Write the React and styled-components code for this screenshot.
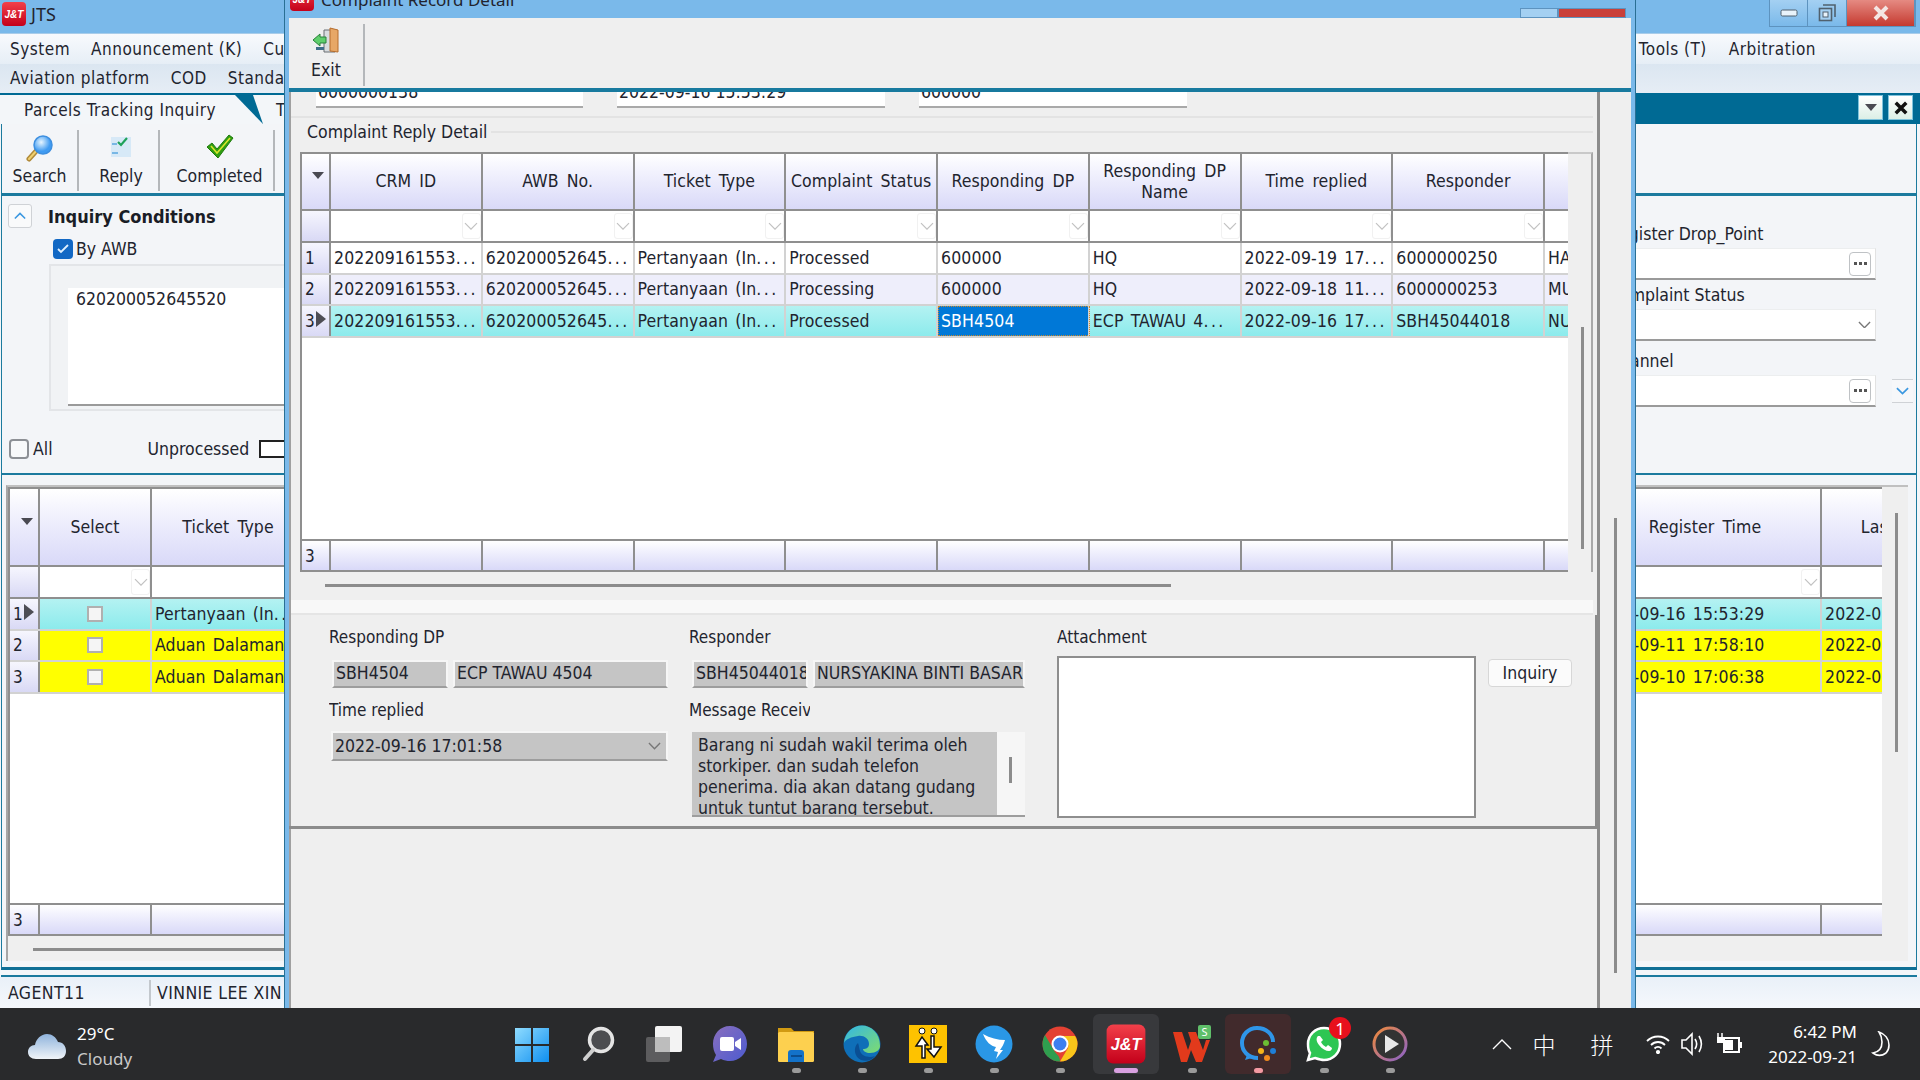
import React from "react";
import styled, { createGlobalStyle } from "styled-components";

const Global = createGlobalStyle`
  html, body { margin: 0; padding: 0; background: #efefef; }
  * { box-sizing: border-box; }
  body { font-family: "DejaVu Sans Condensed", "DejaVu Sans", sans-serif; font-size: 17.5px; color: #22242e; }
`;

const TEAL = "#1b7a9e";
const LINE = "#8f8f8f";
const HEAD = "linear-gradient(180deg,#ffffff 0%,#f1f1fd 35%,#d9d9f8 100%)";
const SELECT = "linear-gradient(180deg,#b4f2f2 0%,#8cebec 100%)";

const Page = styled.div`
  width: 1920px; height: 1080px; overflow: hidden; display: flex; flex-direction: column;
`;
const Desktop = styled.div`
  position: relative; height: 1008px; overflow: hidden;
`;
const MainWindow = styled.div`
  height: 1008px; display: flex; flex-direction: column; background: #f3f6f9;
`;
const TitleBar = styled.div`
  height: 34px; background: #7ab9ea; display: flex; align-items: flex-start; flex: none;
  border-bottom: 1px solid #a9cdea;
`;
const AppName = styled.div`
  display: flex; align-items: center; gap: 4px; height: 27px; padding-left: 1px; font-size: 18px; font-family: "Noto Sans", sans-serif;
`;
const WinControls = styled.div`
  margin-left: auto; margin-right: 4px; display: flex; height: 27px; border: 1px solid #5d93bf; border-top: 0;
`;
const WinBtn = styled.div`
  width: ${p => p.$w}px; display: flex; align-items: center; justify-content: center;
  background: ${p => p.$close ? "linear-gradient(180deg,#e58a82,#c53a30)" : "linear-gradient(180deg,#a4d0f2,#7ab9ea)"};
  border-right: 1px solid #5d93bf;
`;
const MenuBar = styled.div`
  height: 59px; flex: none; display: flex; flex-direction: column;
`;
const MenuRow = styled.div`
  height: 29.5px; display: flex; align-items: center; gap: 21px; padding-left: 10px; font-size: 17px; letter-spacing: .5px;
  background: ${p => p.$top ? "linear-gradient(180deg,#f8fafd,#e6eef6)" : "linear-gradient(180deg,#dbe6f1,#e6edf5)"};
`;
const MenuRight = styled.div`
  margin-left: auto; margin-right: 104px; display: flex; gap: 22px;
`;
const TabBand = styled.div`
  height: 31px; flex: none; background: #006a94; display: flex; align-items: stretch; padding-top: 2px;
`;
const Tab = styled.div`
  width: 263px; padding-left: 24px; display: flex; align-items: center; font-size: 17px; letter-spacing: .5px; background: #f3f6f9; white-space: nowrap;
  clip-path: polygon(0 0, 235px 0, 263px 100%, 0 100%);
`;
const SecondTab = styled.div`
  width: 210px; margin-left: -10px; padding-left: 23px; display: flex; align-items: center; font-size: 17px; background: #f3f6f9;
  clip-path: polygon(0 0, 100% 0, 100% 100%, 10px 100%);
`;
const BandButtons = styled.div`
  margin-left: auto; margin-right: 7px; display: flex; gap: 5px; align-items: flex-start;
`;
const BandBtn = styled.div`
  width: 25px; height: 25px; background: linear-gradient(180deg,#ffffff,#dcefe6); border: 1px solid #7fc3dc;
  display: flex; align-items: center; justify-content: center;
`;
const MainToolbar = styled.div`
  height: 72px; flex: none; margin: 0 3px 0 1px; display: flex; background: #f3f5f8;
  border-left: 1px solid ${TEAL}; border-right: 1px solid ${TEAL}; border-bottom: 3px solid ${TEAL}; padding-top: 6px; padding-bottom: 2px;
`;
const ToolBtn = styled.div`
  width: ${p => p.$w}px; display: flex; flex-direction: column; align-items: center; justify-content: space-between;
  border-right: 2px solid #b4b7ba; font-size: 17.5px; line-height: 24px; padding: 4px 0 3px ${p => p.$pl || 0}px;
`;
const InquiryPanel = styled.div`
  height: 279px; flex: none; margin: 0 3px 0 1px; display: flex; justify-content: space-between; background: #f3f5f8;
  border-left: 1px solid ${TEAL}; border-right: 1px solid ${TEAL}; border-bottom: 2px solid ${TEAL};
`;
const CondLeft = styled.div`
  width: 284px; display: flex; flex-direction: column; padding-top: 8px; overflow: hidden;
`;
const CondHead = styled.div`
  display: flex; align-items: center; padding-left: 6px; height: 24px; font-weight: 700; font-size: 18px; color: #1a1d26;
`;
const CollapseBtn = styled.div`
  width: 24px; height: 24px; margin-right: 16px; background: #f9fafb; border: 1px solid #cfd2d6; border-radius: 3px; flex: none;
  display: flex; align-items: center; justify-content: center;
`;
const CheckLine = styled.div`
  display: flex; align-items: center; gap: 3px; padding-left: 51px; margin-top: 9px; height: 24px;
`;
const BlueCheck = styled.div`
  width: 20px; height: 20px; border-radius: 4px; background: #1268c4; display: flex; align-items: center; justify-content: center; flex: none;
`;
const AwbGroup = styled.div`
  margin: 3px 0 0 47px; width: 300px; height: 147px; flex: none; border: 2px solid #e3e5e8; padding: 22px 0 0 17px; background: #f1f3f5;
`;
const AwbText = styled.div`
  height: 118px; background: #fff; border-bottom: 2px solid #9a9a9a; padding: 1px 8px; font-size: 17.5px;
`;
const OptionLine = styled.div`
  display: flex; align-items: center; margin-top: 26px; padding-left: 7px; height: 24px; flex: none;
`;
const EmptyCheck = styled.div`
  width: 20px; height: 20px; flex: none; border: 2px solid #8d9095; border-radius: 4px; background: #f8f9fa; margin-right: 4px;
`;
const UnprocLabel = styled.div`
  margin-left: 95px; white-space: nowrap; flex: none;
`;
const UnprocBox = styled.div`
  width: 40px; height: 18px; border: 2px solid #222; background: #fff; margin-left: 10px; flex: none;
`;
const CondRight = styled.div`
  width: 500px; padding-top: 25px; display: flex; flex-direction: column; padding-left: 213px;
`;
const CondLabel = styled.div`
  height: 27px; line-height: 27px; margin-left: -20px; white-space: nowrap;
`;
const CondRowLine = styled.div`
  display: flex; align-items: center; margin-bottom: ${p => p.$mb}px;
`;
const CondField = styled.div`
  width: 247px; height: 32px; flex: none; background: #fff; border-bottom: 2px solid #9a9a9a;
  border-right: 1px solid #e2e2e2; border-top: 1px solid #eceeef; display: flex; align-items: center; justify-content: flex-end; padding-right: 4px;
`;
const DotsBtn = styled.div`
  width: 22px; height: 24px; border: 1px solid #bfc2c5; border-radius: 4px; background: #fff; display: flex; align-items: center; justify-content: center; gap: 2px;
`;
const Dot = styled.i`
  width: 3px; height: 3px; background: #555; display: block;
`;
const SmallChevronBtn = styled.div`
  width: 21px; height: 24px; margin-left: 16px; background: #f6f7f9; border-top: 1px solid #cfd2d6; border-bottom: 1px solid #cfd2d6;
  display: flex; align-items: center; justify-content: center;
`;
const LowerPanel = styled.div`
  flex: 1; margin: 0 3px 0 1px; min-height: 0; background: #f3f5f8; border-left: 1px solid ${TEAL}; border-right: 1px solid ${TEAL};
  border-bottom: 3px solid #0f6f96; padding: 10px 8px 7px 4px; display: flex; flex-direction: column;
`;
const LowerInner = styled.div`
  flex: 1; background: #efefef; border-left: 2px solid #a6a6a6; border-top: 2px solid #c0c0c0; display: flex; flex-direction: column;
`;
const LowerGridRow = styled.div`
  display: flex; height: 449px; flex: none;
`;
const ThumbGutter = styled.div`
  flex: 1; padding-left: ${p => p.$pl}px; padding-top: ${p => p.$pt}px;
`;
const VThumb = styled.div`
  width: 3px; height: ${p => p.$h}px; background: #8c8c8c;
`;
const HThumbRow = styled.div`
  height: ${p => p.$h}px; padding-left: ${p => p.$pl}px; padding-top: ${p => p.$pt}px; flex: none;
`;
const HThumb = styled.div`
  height: 3px; width: ${p => p.$w}px; background: #8c8c8c;
`;
const ThinBar = styled.div`
  height: 2px; flex: none; margin: 5px 3px 0 1px; background: ${TEAL};
`;
const StatusBar = styled.div`
  height: 31px; flex: none; display: flex; align-items: center; background: linear-gradient(180deg,#e9f0f8,#f5f8fc); font-size: 17.5px;
`;
const StatusCell = styled.div`
  width: ${p => p.$w}px; padding-left: ${p => p.$pl}px; border-right: ${p => p.$sep ? "2px solid #c3c8cd" : "none"}; height: 26px; line-height: 26px; white-space: nowrap; letter-spacing: .4px;
`;

/* data grid */
const DataGrid = styled.div`
  width: ${p => p.$w}px; flex: none; background: #fff; display: flex; flex-direction: column; overflow: hidden;
  border-left: 2px solid ${LINE}; border-top: 2px solid ${LINE};
`;
const GridRow = styled.div`
  display: grid; grid-template-columns: ${p => p.$cols}; height: ${p => p.$h}px; flex: none;
  border-bottom: ${p => p.$b || `2px solid ${LINE}`};
  border-top: ${p => p.$t ? `2px solid ${LINE}` : "none"};
  background: ${p => p.$bg || "#fff"};
`;
const GridBlank = styled.div`
  flex: 1;
`;
const Corner = styled.div`
  background: ${HEAD}; border-right: 2px solid ${LINE}; display: flex; align-items: center; justify-content: flex-end; padding: 0 5px 12px 0;
`;
const HeadCell = styled.div`
  background: ${HEAD}; border-right: ${p => p.$last ? "none" : `2px solid ${LINE}`}; display: flex; align-items: center; justify-content: center; text-align: center;
  line-height: 21px; white-space: pre-line; padding: 0 2px; overflow: hidden; word-spacing: 3px; letter-spacing: .1px;
`;
const FilterCell = styled.div`
  background: #fff; border-right: ${p => p.$last ? "none" : `2px solid ${LINE}`}; display: flex; justify-content: flex-end; padding: 2px 0;
`;
const FilterDrop = styled.div`
  width: 19px; border: 1px solid #f1f1f1; border-radius: 3px; display: flex; align-items: center; justify-content: center;
`;
const IndexCell = styled.div`
  background: linear-gradient(180deg,#f6f6fe,#d9d9f5); border-right: 2px solid ${LINE}; display: flex; align-items: center; padding-left: 3px; gap: 1px; font-size: 17px; overflow: hidden;
`;
const Arrow = styled.i`
  width: 0; height: 0; border-left: 10px solid #4d4d55; border-top: 8px solid transparent; border-bottom: 8px solid transparent; margin-top: -4px; display: block; flex: none;
`;
const DataCell = styled.div`
  border-right: ${p => p.$last ? "none" : "2px solid #d2d2d2"}; padding-left: 3px; display: flex; align-items: center; white-space: pre; overflow: hidden; letter-spacing: .12px; word-spacing: 2px;
  ${p => p.$active && `background:#0078d7;color:#fff;outline:1px dotted #c98a2b;outline-offset:-1px;`}
`;
const Dots = styled.span`
  letter-spacing: 2.4px;
`;
const CheckCell = styled.div`
  border-right: 2px solid #d2d2d2; display: flex; align-items: center; justify-content: center;
`;
const SquareBox = styled.div`
  width: 16px; height: 16px; border: 2px solid #b0b0b0; background: #f5f5f5;
`;
const FootCell = styled.div`
  background: ${HEAD}; border-right: ${p => p.$last ? "none" : `2px solid ${LINE}`}; display: flex; align-items: center; padding-left: 3px; font-size: 17px;
`;

/* dialog */
const Dialog = styled.div`
  position: absolute; left: 285px; top: 0; width: 1350px; height: 1008px; display: flex; flex-direction: column;
  background: #efefef; border-left: 4px solid #7ab9ea; border-right: 4px solid #7ab9ea; box-shadow: 0 0 0 1px #2a6f94;
`;
const DialogTitle = styled.div`
  height: 18px; flex: none; margin: 0 -3px; background: #7ab9ea; display: flex; align-items: flex-end; overflow: hidden; padding-bottom: 6px; gap: 6px; padding-left: 3px;
`;
const DialogName = styled.div`
  font-family: "Noto Sans", sans-serif; font-size: 17px; line-height: 24px; height: 24px; flex: none;
`;
const DialogControls = styled.div`
  margin-left: auto; margin-right: 8px; margin-bottom: -6px; height: 10px; display: flex; align-self: flex-end;
`;
const DlgBtn = styled.div`
  width: ${p => p.$w}px; border: 1px solid #5d93bf; background: ${p => p.$close ? "#c9403a" : "#a4d0f2"};
`;
const DialogToolbar = styled.div`
  height: 74px; flex: none; display: flex; padding: 6px 0 2px; border-bottom: 4px solid #187a9f;
`;
const ExitBtn = styled.div`
  width: 76px; border-right: 2px solid #b4b7ba; display: flex; flex-direction: column; align-items: center; justify-content: space-between; padding: 2px 0 4px; line-height: 24px;
`;
const DialogBody = styled.div`
  flex: 1; display: flex; min-height: 0;
`;
const DialogContent = styled.div`
  width: 1311px; flex: none; height: 100%; border-left: 2px solid #a0a0a0; border-right: 3px solid #8c8c8c; display: flex; flex-direction: column;
`;
const OuterGutter = styled.div`
  flex: 1; padding: 426px 0 0 14px;
`;
const FormStrip = styled.div`
  height: 26px; flex: none; display: flex; gap: 34px; padding-left: 25px; border-bottom: 2px solid #e3e3e3; margin-right: 4px;
`;
const CutField = styled.div`
  width: ${p => p.$w}px; height: 16px; background: #fff; border-bottom: 2px solid #a9a9a9; overflow: hidden; display: flex; align-items: flex-end; padding-left: 2px; padding-bottom: 2px;
`;
const CutText = styled.div`
  line-height: 24px; height: 24px; flex: none;
`;
const GroupTitle = styled.div`
  height: 34px; flex: none; display: flex; align-items: center; padding: 0 0 6px 16px; gap: 4px; margin-right: 4px;
  &::after { content: ""; flex: 1; height: 2px; background: #e3e3e3; }
`;
const GridArea = styled.div`
  display: flex; height: 420px; flex: none; padding-left: 9px; margin-right: 4px;
`;
const GridGutter = styled.div`
  flex: 1; padding: 173px 0 0 13px; border-right: 2px solid #a8a8a8; border-top: 2px solid #c9c9c9;
`;
const SplitBand = styled.div`
  height: 15px; flex: none; background: #f8f8f8; border-bottom: 2px solid #e5e5e5; margin-right: 4px;
`;
const DetailPanel = styled.div`
  height: 211px; flex: none; display: flex; padding: 10px 0 0 38px; border-right: 3px solid #8c8c8c; margin-right: -1px;
`;
const DetailCol = styled.div`
  width: ${p => p.$w}px; flex: none; display: flex; flex-direction: column;
`;
const DLabel = styled.div`
  width: ${p => p.$w}px; height: 24px; line-height: 24px; overflow: hidden; white-space: nowrap; font-size: 17px;
`;
const FieldLine = styled.div`
  display: flex; gap: 5px; margin: 11px 0 10px; padding-left: ${p => p.$pl || 0}px;
`;
const GrayField = styled.div`
  width: ${p => p.$w}px; height: 28px; flex: none; background: #c5c5c5; border: 2px solid #f6f6f6; border-bottom: 2px solid #9d9d9d;
  padding-left: 2px; line-height: 23px; overflow: hidden; white-space: nowrap;
`;
const GrayCombo = styled.div`
  width: 337px; height: 30px; margin-left: 2px; display: flex; align-items: center; justify-content: space-between; background: #c5c5c5; border: 2px solid #f6f6f6; border-bottom: 2px solid #9d9d9d; padding: 0 5px 0 2px; margin-top: 9px;
`;
const MessageBox = styled.div`
  width: 333px; height: 85px; margin: 10px 0 0 3px; display: flex; border-bottom: 2px solid #9d9d9d; background: #f6f6f6; flex: none; overflow: hidden;
`;
const MessageText = styled.div`
  width: 305px; flex: none; height: 100%; overflow: hidden; background: #c5c5c5; padding: 3px 0 0 6px; font-size: 17.5px; line-height: 21px;
`;
const MessageBar = styled.div`
  flex: 1; padding: 25px 0 0 12px;
`;
const AttachRow = styled.div`
  display: flex; gap: 12px; margin-top: 7px;
`;
const AttachBox = styled.div`
  width: 419px; height: 162px; background: #fff; border: 2px solid #8e8e8e; flex: none;
`;
const InquiryBtn = styled.div`
  width: 85px; height: 28px; margin-top: 3px; background: #fbfbfb; border: 1px solid #d7d7d7; border-radius: 4px; display: flex; align-items: center; justify-content: center;
`;
const BelowPanel = styled.div`
  flex: 1; border-top: 3px solid #8c8c8c; margin-left: -2px; margin-right: -1px;
`;

/* taskbar */
const Taskbar = styled.div`
  height: 72px; flex: none; background: #292a2c; display: flex; color: #fff; font-family: "Noto Sans", sans-serif;
`;
const Weather = styled.div`
  width: 499px; flex: none; display: flex; align-items: center; padding: 3px 0 0 28px; gap: 11px;
`;
const WeatherText = styled.div`
  display: flex; flex-direction: column; font-size: 17px; line-height: 25px;
`;
const WeatherSub = styled.div`
  color: #c8c8c8;
`;
const AppStrip = styled.div`
  display: flex; align-items: flex-start;
`;
const AppSlot = styled.div`
  width: 66px; height: 60px; margin-top: 6px; border-radius: 6px; display: flex; flex-direction: column; align-items: center; padding-top: 10px; gap: 4px; position: relative;
  background: ${p => p.$bg || "transparent"};
`;
const AppIcon = styled.div`
  height: 40px; display: flex; align-items: center; justify-content: center; position: relative;
`;
const Pill = styled.i`
  display: block; height: 5px; border-radius: 3px; width: ${p => p.$w || 9}px; background: ${p => p.$c || "#9a9a9a"};
`;
const Badge = styled.div`
  position: absolute; right: -9px; top: -7px; width: 22px; height: 22px; border-radius: 50%; background: #e8101c; color: #fff; font-size: 17px; display: flex; align-items: center; justify-content: center;
`;
const Tray = styled.div`
  display: flex; align-items: center; margin-left: 67px;
`;
const TrayItem = styled.div`
  width: ${p => p.$w}px; margin-left: ${p => p.$ml || 0}px; flex: none; display: flex; justify-content: center; align-items: center;
  font-family: "Noto Sans CJK SC", sans-serif; font-size: 23px; font-weight: 300; line-height: 28px;
`;
const Clock = styled.div`
  width: 100px; margin-left: 14px; text-align: right; font-size: 17px; line-height: 25px; flex: none;
`;

/* icons */
const JntIcon = ({ size = 26 }) => (
  <svg width={size} height={size} viewBox="0 0 26 26">
    <defs><linearGradient id="jr" x1="0" y1="0" x2="0" y2="1"><stop offset="0" stopColor="#f2404a" /><stop offset="1" stopColor="#c4001a" /></linearGradient></defs>
    <rect x="1" y="1" width="24" height="24" rx="4" fill="url(#jr)" />
    <text x="13" y="17" textAnchor="middle" fontSize="10" fontWeight="700" fontStyle="italic" fill="#fff" fontFamily="Liberation Sans, sans-serif">J&amp;T</text>
  </svg>
);
const SearchIcon = () => (
  <svg width="28" height="28" viewBox="0 0 28 28">
    <defs><radialGradient id="sl" cx=".4" cy=".35"><stop offset="0" stopColor="#e6f5ff" /><stop offset="1" stopColor="#3f9bf2" /></radialGradient></defs>
    <path d="M3 25 L12 15" stroke="#b08a3a" strokeWidth="5" strokeLinecap="round" />
    <path d="M3 25 L12 15" stroke="#f0d070" strokeWidth="2" strokeLinecap="round" />
    <circle cx="17" cy="11" r="9" fill="url(#sl)" stroke="#3d8fe0" strokeWidth="1.5" />
  </svg>
);
const ReplyIcon = () => (
  <svg width="24" height="24" viewBox="0 0 24 24">
    <rect x="2" y="3" width="20" height="20" fill="#d7e9f7" />
    <path d="M3 10h5M3 19h6" stroke="#59a7df" strokeWidth="1.6" />
    <path d="M9 8l3 3 6-7" stroke="#1fa25a" strokeWidth="2.2" fill="none" />
  </svg>
);
const CheckIcon = () => (
  <svg width="28" height="26" viewBox="0 0 28 26">
    <path d="M1 13l5-4 5 6L23 1l4 3-15 20z" fill="#2f9e12" stroke="#1e7a0a" strokeWidth="1" />
    <path d="M5 12l6 7L24 4" stroke="#d9e62a" strokeWidth="1.6" fill="none" />
  </svg>
);
const ExitIcon = () => (
  <svg width="28" height="28" viewBox="0 0 28 28">
    <path d="M12 4h11v22H12z" fill="#d8dcdf" stroke="#6b6f72" />
    <path d="M18 2l8 2v22l-8-1z" fill="#e7a766" stroke="#b66d2d" />
    <path d="M1 14l7-6v3h6v6H8v3z" fill="#5fce6b" stroke="#28813a" />
    <rect x="4" y="21" width="8" height="3" fill="#3f6d8a" />
  </svg>
);
const Chev = ({ c = "#c2c2c2", w = 14, sw = 1.2 }) => (
  <svg width={w} height={w * 0.6} viewBox="0 0 14 8"><path d="M1 1l6 6 6-6" fill="none" stroke={c} strokeWidth={sw} /></svg>
);
const CaretDown = () => (
  <svg width="12" height="7" viewBox="0 0 12 7"><path d="M0 0h12L6 7z" fill="#4a4a52" /></svg>
);
const XGlyph = ({ s = 16, c = "#111", sw = 4 }) => (
  <svg width={s} height={s} viewBox="0 0 16 16"><path d="M2 2l12 12M14 2L2 14" stroke={c} strokeWidth={sw} /></svg>
);
const MinGlyph = () => (
  <svg width="18" height="8" viewBox="0 0 18 8"><rect x="1" y="1" width="16" height="6" rx="1.5" fill="#e8f3fb" stroke="#50616e" /></svg>
);
const RestoreGlyph = () => (
  <svg width="18" height="18" viewBox="0 0 18 18"><path d="M5 1h12v12" fill="none" stroke="#50616e" strokeWidth="1.6" /><rect x="1.5" y="4.5" width="12" height="12" fill="#a4d0f2" stroke="#50616e" strokeWidth="1.6" /><rect x="5" y="8" width="5" height="5" fill="#e8f3fb" stroke="#50616e" /></svg>
);
const WinLogo = () => (
  <svg width="36" height="36" viewBox="0 0 36 36">
    <defs><linearGradient id="wl" x1="0" y1="0" x2="1" y2="1"><stop offset="0" stopColor="#8fdcff" /><stop offset="1" stopColor="#0f8ff0" /></linearGradient></defs>
    <path d="M1 2h16v16H1zM19 2h16v16H19zM1 20h16v16H1zM19 20h16v16H19z" fill="url(#wl)" />
  </svg>
);
const TaskSearch = () => (
  <svg width="36" height="38" viewBox="0 0 36 38">
    <circle cx="21" cy="15" r="11.5" fill="#4c4d50" stroke="#e4e4e4" strokeWidth="3.5" />
    <path d="M13 25L5 34" stroke="#cfcfcf" strokeWidth="4" strokeLinecap="round" />
  </svg>
);
const TaskView = () => (
  <svg width="38" height="38" viewBox="0 0 38 38">
    <rect x="1" y="12" width="24" height="25" rx="2" fill="#5c5c5e" />
    <rect x="10" y="1" width="27" height="26" rx="2" fill="#f3f3f3" />
    <rect x="10" y="12" width="15" height="15" fill="#bdbdbd" />
  </svg>
);
const ChatIcon = () => (
  <svg width="36" height="38" viewBox="0 0 36 38">
    <defs><linearGradient id="ch" x1="0" y1="0" x2="1" y2="1"><stop offset="0" stopColor="#8a6fbe" /><stop offset="1" stopColor="#4c5bd0" /></linearGradient></defs>
    <path d="M18 1c10 0 17 8 17 18s-8 17-17 17c-3 0-6-.5-9-2l-8 3 3-7C2 27 1 23 1 19 1 9 8 1 18 1z" fill="url(#ch)" />
    <rect x="8" y="12" width="14" height="14" rx="2" fill="#fff" />
    <path d="M23 17l6-4v12l-6-4z" fill="#fff" />
  </svg>
);
const FolderIcon = () => (
  <svg width="38" height="38" viewBox="0 0 38 38">
    <path d="M1 3h13l3 3h20v6H1z" fill="#d19a12" />
    <rect x="1" y="7" width="36" height="30" rx="1.5" fill="#fdd04f" />
    <path d="M11 37V28c0-2 1-3 3-3h10c2 0 3 1 3 3v9z" fill="#1372c9" />
    <rect x="14" y="30" width="11" height="2" fill="#0b4d8f" />
  </svg>
);
const EdgeIcon = () => (
  <svg width="38" height="38" viewBox="0 0 38 38">
    <defs><linearGradient id="ed" x1="0" y1="0" x2="1" y2="1"><stop offset="0" stopColor="#32b6e6" /><stop offset="1" stopColor="#7fdc6f" /></linearGradient></defs>
    <circle cx="19" cy="19" r="18.5" fill="#0f6fb8" />
    <path d="M1 18C2 7 10 .5 19 .5S37 8 37 21c0 4-4 7-10 7-4 0-7-2-7-4 3 0 6-1 6-5 0-6-6-9-11-8C8 12 3 14 1 18z" fill="url(#ed)" />
    <path d="M15 18c-5 4-4 14 3 17 6 2 11 0 14-4-5 2-13 1-15-5-1-3-1-6-2-8z" fill="#0a4f94" />
  </svg>
);
const PeopleIcon = () => (
  <svg width="38" height="38" viewBox="0 0 38 38">
    <rect width="38" height="38" fill="#fec200" />
    <circle cx="13" cy="6" r="3" fill="#fff" stroke="#111" /><circle cx="25" cy="6" r="3" fill="#fff" stroke="#111" />
    <path d="M13 33V21H7l6-9 6 8h-3v13z" fill="#fff" stroke="#111" strokeWidth="1.5" />
    <path d="M25 11v11h7l-7 10-7-8h4V11z" fill="#fff" stroke="#111" strokeWidth="1.5" />
  </svg>
);
const DingIcon = () => (
  <svg width="38" height="38" viewBox="0 0 38 38">
    <circle cx="19" cy="19" r="18.5" fill="#2a97e6" />
    <path d="M8 9c7 4 15 6 22 6-1 4-3 7-5 10l3 0-7 9 2-7-4-1 2-4c-5-1-10-5-13-13z" fill="#fff" />
  </svg>
);
const ChromeIcon = () => (
  <svg width="36" height="36" viewBox="0 0 36 36">
    <circle cx="18" cy="18" r="17.5" fill="#e34133" />
    <path d="M3 9l10 17c2 3 5 4 5 9.5C8 35.5.5 28 .5 18 .5 15 1.5 12 3 9z" fill="#2f9e4f" />
    <path d="M18 10h15c2 3 2.5 5.500 2.500 8 0 10-8 17.500-17.500 17.500L26 22c1-3 0-8-8-12z" fill="#f8c51a" />
    <circle cx="18" cy="18" r="8.500" fill="#fff" /><circle cx="18" cy="18" r="6.500" fill="#3d7ff0" />
  </svg>
);
const WpsIcon = () => (
  <svg width="40" height="38" viewBox="0 0 40 38">
    <path d="M1 7h9l6 18 3-9-3-9h8l7 18 3-10h4l-8 22h-6l-5-12-4 12h-6z" fill="#e23a1c" />
    <rect x="26" y="0" width="13" height="14" rx="2" fill="#5fbf6a" />
    <text x="32.500" y="11" textAnchor="middle" fontSize="11" fill="#fff" fontFamily="Noto Sans, sans-serif">S</text>
  </svg>
);
const QIcon = () => (
  <svg width="38" height="38" viewBox="0 0 38 38">
    <path d="M19 33C9 33 3 26 3 18S9 3 18 3s16 6 16 14" fill="none" stroke="#2f95e8" strokeWidth="4" />
    <path d="M8 30l5 3-7 2z" fill="#2f95e8" />
    <circle cx="27" cy="18" r="3" fill="#6bbe33" /><circle cx="34" cy="26" r="3" fill="#1e7fd8" />
    <circle cx="28" cy="33" r="3" fill="#f08a1d" /><circle cx="22" cy="26" r="3" fill="#f4b41a" />
  </svg>
);
const WhatsIcon = () => (
  <svg width="36" height="38" viewBox="0 0 36 38">
    <path d="M18 3c9 0 16 7 16 16s-7 16-16 16c-3 0-6-1-9-2l-7 2 2-7c-2-3-2-6-2-9C2 10 9 3 18 3z" fill="#2dc653" stroke="#fff" strokeWidth="2.500" />
    <path d="M12 11c-2 2-2 5 1 9 3 4 7 6 10 6 2 0 3-2 3-3l-4-3-2 2c-2-1-4-3-5-5l2-2-3-4z" fill="#fff" />
  </svg>
);
const PlayIcon = () => (
  <svg width="36" height="38" viewBox="0 0 36 38">
    <defs><linearGradient id="pl" x1="0" y1="0" x2="1" y2="1"><stop offset="0" stopColor="#f08a3a" /><stop offset="1" stopColor="#8a62c9" /></linearGradient></defs>
    <circle cx="18" cy="19" r="16" fill="#333" stroke="url(#pl)" strokeWidth="3" />
    <path d="M13 10l14 9-14 9z" fill="#e8e8e8" />
  </svg>
);
const CloudIcon = () => (
  <svg width="38" height="26" viewBox="0 0 38 26">
    <defs><linearGradient id="cl" x1="0" y1="0" x2="0" y2="1"><stop offset="0" stopColor="#8fb3dc" /><stop offset="1" stopColor="#f0f4f8" /></linearGradient></defs>
    <path d="M8 26C3 26 0 23 0 19c0-4 3-7 7-7 1-6 6-11 12-11 5 0 9 3 11 8 5 0 8 4 8 9s-3 8-8 8z" fill="url(#cl)" />
  </svg>
);
const WifiIcon = () => (
  <svg width="24" height="20" viewBox="0 0 24 20" fill="none" stroke="#fff" strokeWidth="1.8">
    <path d="M1 7c6-6 16-6 22 0M5 11c4-4 10-4 14 0M8.500 14.500c2-2 5-2 7 0" /><circle cx="12" cy="18" r="1.200" fill="#fff" />
  </svg>
);
const VolIcon = () => (
  <svg width="26" height="24" viewBox="0 0 26 24" fill="none" stroke="#fff" strokeWidth="1.600">
    <path d="M2 8h4l6-6v20l-6-6H2z" /><path d="M15 7c2 3 2 7 0 10M19 4c3 5 3 11 0 16" />
  </svg>
);
const BatteryIcon = () => (
  <svg width="26" height="24" viewBox="0 0 26 24" fill="#fff">
    <path d="M1 1v4M5 1v4" stroke="#fff" strokeWidth="1.500" /><path d="M0 5h7v6H0z" />
    <path d="M7 6h15v14H7z" fill="none" stroke="#fff" strokeWidth="2" /><rect x="8" y="8" width="8" height="10" /><rect x="23" y="10" width="2" height="6" />
  </svg>
);
const MoonIcon = () => (
  <svg width="22" height="26" viewBox="0 0 22 26"><path d="M8 1c6 2 10 7 10 13 0 3-1 6-3 8-4 3-9 3-13 0 6-1 9-5 9-11 0-4-1-7-3-10z" fill="none" stroke="#fff" strokeWidth="1.600" /></svg>
);

const Cell = ({ text, ...rest }) => {
  const cut = text.endsWith("...");
  return <DataCell {...rest}>{cut ? text.slice(0, -3) : text}{cut && <Dots>...</Dots>}</DataCell>;
};

const LOWER = "30px 112px 154px 1284px 232px 210px";
const UPPER = "29px repeat(8, 151.75px) 25px";
const upperHeads = ["CRM ID", "AWB No.", "Ticket Type", "Complaint Status", "Responding DP", "Responding DP\nName", "Time replied", "Responder"];
const upperRows = [
  { bg: "#fff", cells: ["202209161553...", "620200052645...", "Pertanyaan (In...", "Processed", "600000", "HQ", "2022-09-19 17...", "6000000250", "HA"] },
  { bg: "#eeeefb", cells: ["202209161553...", "620200052645...", "Pertanyaan (In...", "Processing", "600000", "HQ", "2022-09-18 11...", "6000000253", "MU"] },
  { bg: SELECT, sel: true, cells: ["202209161553...", "620200052645...", "Pertanyaan (In...", "Processed", "SBH4504", "ECP TAWAU 4...", "2022-09-16 17...", "SBH45044018", "NU"] },
];
const lowerRows = [
  { bg: SELECT, sel: true, ticket: "Pertanyaan (In...", time: "2022-09-16 15:53:29" },
  { bg: "#ffff00", ticket: "Aduan Dalaman ...", time: "2022-09-11 17:58:10" },
  { bg: "#ffff00", ticket: "Aduan Dalaman ...", time: "2022-09-10 17:06:38" },
];
const taskApps = [
  { k: "w", i: <WinLogo /> }, { k: "s", i: <TaskSearch /> }, { k: "t", i: <TaskView /> }, { k: "c", i: <ChatIcon /> },
  { k: "f", i: <FolderIcon />, pill: {} }, { k: "e", i: <EdgeIcon />, pill: {} }, { k: "p", i: <PeopleIcon />, pill: {} },
  { k: "d", i: <DingIcon />, pill: {} }, { k: "g", i: <ChromeIcon />, pill: {} },
  { k: "j", i: <JntIcon size={42} />, pill: { $w: 24, $c: "#d8a0e0" }, bg: "#38393c" },
  { k: "o", i: <WpsIcon />, pill: {} }, { k: "q", i: <QIcon />, pill: { $c: "#f39aa2" }, bg: "#412a2c" },
  { k: "a", i: <WhatsIcon />, pill: {}, badge: "1" }, { k: "v", i: <PlayIcon />, pill: {} },
];

export default function App() {
  return (
    <Page>
      <Global />
      <Desktop>
        <MainWindow>
          <TitleBar>
            <AppName><JntIcon />JTS</AppName>
            <WinControls>
              <WinBtn $w={38}><MinGlyph /></WinBtn>
              <WinBtn $w={39}><RestoreGlyph /></WinBtn>
              <WinBtn $w={68} $close><XGlyph s={16} c="#f4e6e4" /></WinBtn>
            </WinControls>
          </TitleBar>
          <MenuBar>
            <MenuRow $top>
              <span>System</span><span>Announcement (K)</span><span>Customer</span>
              <MenuRight><span>Tools (T)</span><span>Arbitration</span></MenuRight>
            </MenuRow>
            <MenuRow><span>Aviation platform</span><span>COD</span><span>Standard</span></MenuRow>
          </MenuBar>
          <TabBand>
            <Tab>Parcels Tracking Inquiry</Tab>
            <SecondTab>Ticket</SecondTab>
            <BandButtons>
              <BandBtn><CaretDown /></BandBtn>
              <BandBtn><XGlyph s={14} /></BandBtn>
            </BandButtons>
          </TabBand>
          <MainToolbar>
            <ToolBtn $w={77}><SearchIcon />Search</ToolBtn>
            <ToolBtn $w={81} $pl={5}><ReplyIcon />Reply</ToolBtn>
            <ToolBtn $w={115} $pl={6}><CheckIcon />Completed</ToolBtn>
          </MainToolbar>
          <InquiryPanel>
            <CondLeft>
              <CondHead>
                <CollapseBtn><svg width="12" height="8" viewBox="0 0 14 8"><path d="M1 7l6-6 6 6" fill="none" stroke="#3a97e0" strokeWidth="1.800" /></svg></CollapseBtn>
                Inquiry Conditions
              </CondHead>
              <CheckLine>
                <BlueCheck><svg width="12" height="10" viewBox="0 0 12 10"><path d="M1 5l3 3 7-7" fill="none" stroke="#dff0ff" strokeWidth="1.800" /></svg></BlueCheck>
                By AWB
              </CheckLine>
              <AwbGroup><AwbText>620200052645520</AwbText></AwbGroup>
              <OptionLine>
                <EmptyCheck />All
                <UnprocLabel>Unprocessed</UnprocLabel>
                <UnprocBox />
              </OptionLine>
            </CondLeft>
            <CondRight>
              <CondLabel>Register Drop_Point</CondLabel>
              <CondRowLine $mb={2}><CondField><DotsBtn><Dot /><Dot /><Dot /></DotsBtn></CondField></CondRowLine>
              <CondLabel>Complaint Status</CondLabel>
              <CondRowLine $mb={7}><CondField><Chev c="#777" w={13} sw={1.500} /></CondField></CondRowLine>
              <CondLabel>Channel</CondLabel>
              <CondRowLine $mb={0}>
                <CondField><DotsBtn><Dot /><Dot /><Dot /></DotsBtn></CondField>
                <SmallChevronBtn><Chev c="#3a97e0" w={13} sw={1.800} /></SmallChevronBtn>
              </CondRowLine>
            </CondRight>
          </InquiryPanel>
          <LowerPanel>
            <LowerInner>
              <LowerGridRow>
                <DataGrid $w={1874}>
                  <GridRow $cols={LOWER} $h={78}>
                    <Corner><CaretDown /></Corner>
                    <HeadCell>Select</HeadCell>
                    <HeadCell>Ticket Type</HeadCell>
                    <HeadCell />
                    <HeadCell>Register Time</HeadCell>
                    <HeadCell $last>Last Reply Time</HeadCell>
                  </GridRow>
                  <GridRow $cols={LOWER} $h={32}>
                    <IndexCell />
                    <FilterCell><FilterDrop><Chev /></FilterDrop></FilterCell>
                    <FilterCell><FilterDrop><Chev /></FilterDrop></FilterCell>
                    <FilterCell />
                    <FilterCell><FilterDrop><Chev /></FilterDrop></FilterCell>
                    <FilterCell $last />
                  </GridRow>
                  {lowerRows.map((r, i) => (
                    <GridRow key={i} $cols={LOWER} $h={31.6} $bg={r.bg} $b="2px solid #d2d2d2">
                      <IndexCell>{i + 1}{r.sel && <Arrow />}</IndexCell>
                      <CheckCell><SquareBox /></CheckCell>
                      <Cell text={r.ticket} />
                      <Cell text="" />
                      <Cell text={r.time} />
                      <Cell text="2022-09-16 17:01:58" $last />
                    </GridRow>
                  ))}
                  <GridBlank />
                  <GridRow $cols={LOWER} $h={33} $t>
                    <FootCell>3</FootCell><FootCell /><FootCell /><FootCell /><FootCell /><FootCell $last />
                  </GridRow>
                </DataGrid>
                <ThumbGutter $pl={13} $pt={26}><VThumb $h={239} /></ThumbGutter>
              </LowerGridRow>
              <HThumbRow $h={25} $pl={25} $pt={12}><HThumb $w={1400} /></HThumbRow>
            </LowerInner>
          </LowerPanel>
          <ThinBar />
          <StatusBar>
            <StatusCell $w={151} $pl={8} $sep>AGENT11</StatusCell>
            <StatusCell $w={400} $pl={6}>VINNIE LEE XIN</StatusCell>
          </StatusBar>
        </MainWindow>

        <Dialog>
          <DialogTitle>
            <JntIcon />
            <DialogName>Complaint Record Detail</DialogName>
            <DialogControls>
              <DlgBtn $w={38} />
              <DlgBtn $w={68} $close />
            </DialogControls>
          </DialogTitle>
          <DialogToolbar>
            <ExitBtn><ExitIcon />Exit</ExitBtn>
          </DialogToolbar>
          <DialogBody>
            <DialogContent>
              <FormStrip>
                <CutField $w={267}><CutText>6000000138</CutText></CutField>
                <CutField $w={268}><CutText>2022-09-16 15:53:29</CutText></CutField>
                <CutField $w={268}><CutText>600000</CutText></CutField>
              </FormStrip>
              <GroupTitle>Complaint Reply Detail</GroupTitle>
              <GridArea>
                <DataGrid $w={1268}>
                  <GridRow $cols={UPPER} $h={57}>
                    <Corner><CaretDown /></Corner>
                    {upperHeads.map(h => <HeadCell key={h}>{h}</HeadCell>)}
                    <HeadCell $last />
                  </GridRow>
                  <GridRow $cols={UPPER} $h={32}>
                    <IndexCell />
                    {upperHeads.map(h => <FilterCell key={h}><FilterDrop><Chev /></FilterDrop></FilterCell>)}
                    <FilterCell $last />
                  </GridRow>
                  {upperRows.map((r, i) => (
                    <GridRow key={i} $cols={UPPER} $h={31.5} $bg={r.bg} $b="2px solid #d2d2d2">
                      <IndexCell>{i + 1}{r.sel && <Arrow />}</IndexCell>
                      {r.cells.map((c, j) => <Cell key={j} text={c} $active={r.sel && j === 4} $last={j === 8} />)}
                    </GridRow>
                  ))}
                  <GridBlank />
                  <GridRow $cols={UPPER} $h={33} $t>
                    <FootCell>3</FootCell>
                    {upperHeads.map(h => <FootCell key={h} />)}
                    <FootCell $last />
                  </GridRow>
                </DataGrid>
                <GridGutter><VThumb $h={222} /></GridGutter>
              </GridArea>
              <HThumbRow $h={28} $pl={34} $pt={12}><HThumb $w={846} /></HThumbRow>
              <SplitBand />
              <DetailPanel>
                <DetailCol $w={360}>
                  <DLabel $w={122}>Responding DP</DLabel>
                  <FieldLine $pl={3}>
                    <GrayField $w={116}>SBH4504</GrayField>
                    <GrayField $w={215}>ECP TAWAU 4504</GrayField>
                  </FieldLine>
                  <DLabel $w={200}>Time replied</DLabel>
                  <GrayCombo>2022-09-16 17:01:58<Chev c="#777" w={13} sw={1.500} /></GrayCombo>
                </DetailCol>
                <DetailCol $w={368}>
                  <DLabel $w={200}>Responder</DLabel>
                  <FieldLine $pl={3}>
                    <GrayField $w={116}>SBH45044018</GrayField>
                    <GrayField $w={212}>NURSYAKINA BINTI BASARI</GrayField>
                  </FieldLine>
                  <DLabel $w={121}>Message Received</DLabel>
                  <MessageBox>
                    <MessageText>Barang ni sudah wakil terima oleh storkiper. dan sudah telefon penerima. dia akan datang gudang untuk tuntut barang tersebut.</MessageText>
                    <MessageBar><VThumb $h={26} /></MessageBar>
                  </MessageBox>
                </DetailCol>
                <DetailCol $w={515}>
                  <DLabel $w={200}>Attachment</DLabel>
                  <AttachRow>
                    <AttachBox />
                    <InquiryBtn>Inquiry</InquiryBtn>
                  </AttachRow>
                </DetailCol>
              </DetailPanel>
              <BelowPanel />
            </DialogContent>
            <OuterGutter><VThumb $h={455} /></OuterGutter>
          </DialogBody>
        </Dialog>
      </Desktop>
      <Taskbar>
        <Weather>
          <CloudIcon />
          <WeatherText>29°C<WeatherSub>Cloudy</WeatherSub></WeatherText>
        </Weather>
        <AppStrip>
          {taskApps.map(a => (
            <AppSlot key={a.k} $bg={a.bg}>
              <AppIcon>{a.i}{a.badge && <Badge>{a.badge}</Badge>}</AppIcon>
              {a.pill && <Pill {...a.pill} />}
            </AppSlot>
          ))}
        </AppStrip>
        <Tray>
          <TrayItem $w={24}><svg width="20" height="12" viewBox="0 0 20 12"><path d="M1 11l9-9 9 9" fill="none" stroke="#fff" strokeWidth="1.400" /></svg></TrayItem>
          <TrayItem $w={24} $ml={18}>中</TrayItem>
          <TrayItem $w={24} $ml={34}>拼</TrayItem>
          <TrayItem $w={24} $ml={32}><WifiIcon /></TrayItem>
          <TrayItem $w={26} $ml={10}><VolIcon /></TrayItem>
          <TrayItem $w={26} $ml={11}><BatteryIcon /></TrayItem>
          <Clock>6:42 PM<br />2022-09-21</Clock>
          <TrayItem $w={22} $ml={14}><MoonIcon /></TrayItem>
        </Tray>
      </Taskbar>
    </Page>
  );
}
